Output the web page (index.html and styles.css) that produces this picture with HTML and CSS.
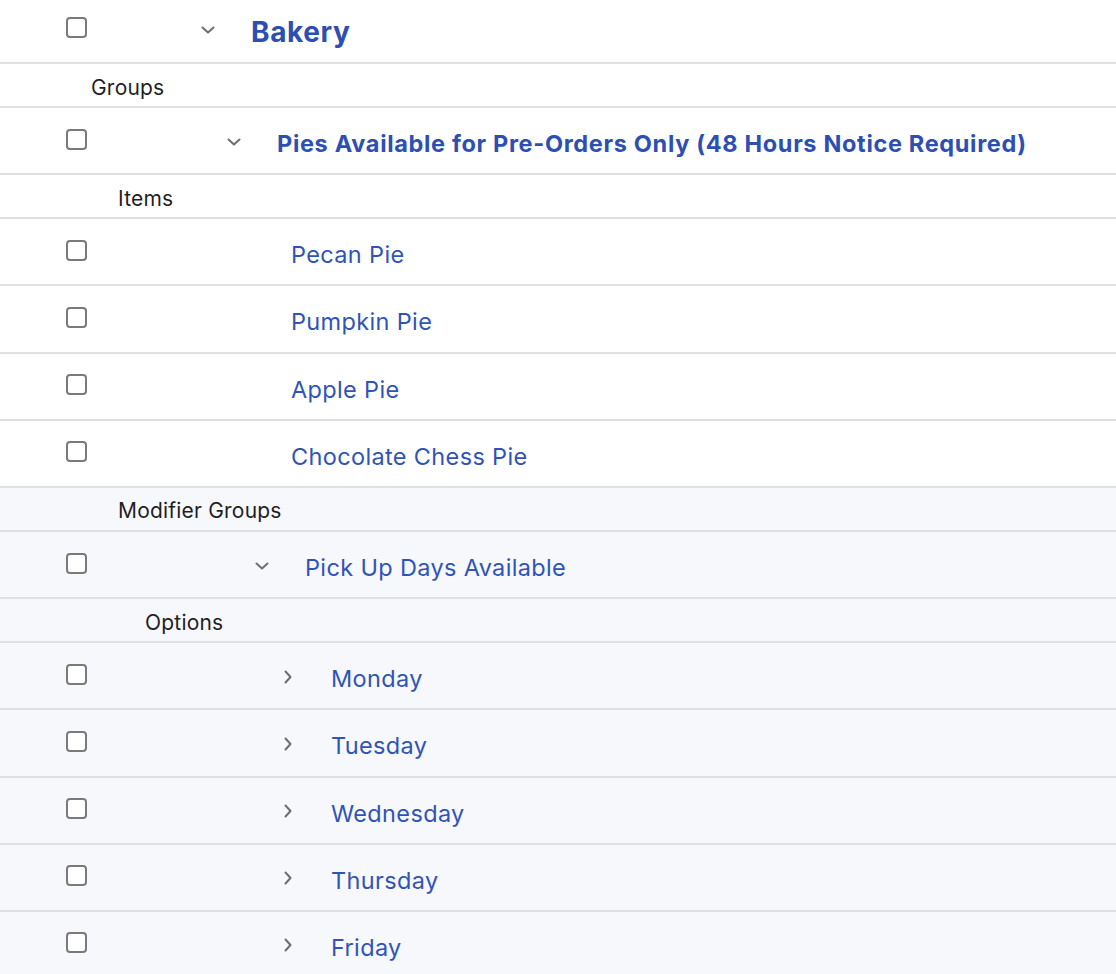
FILE: index.html
```html
<!DOCTYPE html>
<html>
<head>
<meta charset="utf-8">
<link rel="stylesheet" href="styles.css">
</head>
<body>
<div class="tree">
  <div class="row">
    <div class="cb-cell"><span class="box"></span></div>
    <div class="name lv0">
      <span class="chev"><svg width="14" height="8" viewBox="0 0 14 8"><path d="M1.5 1.5 L7 6.5 L12.5 1.5" /></svg></span>
      <span class="title t-xl">Bakery</span>
    </div>
  </div>
  <div class="head h1">Groups</div>
  <div class="row">
    <div class="cb-cell"><span class="box"></span></div>
    <div class="name lv1">
      <span class="chev"><svg width="14" height="8" viewBox="0 0 14 8"><path d="M1.5 1.5 L7 6.5 L12.5 1.5" /></svg></span>
      <span class="title t-lg">Pies Available for Pre-Orders Only (48 Hours Notice Required)</span>
    </div>
  </div>
  <div class="head h2">Items</div>
  <div class="row">
    <div class="cb-cell"><span class="box"></span></div>
    <div class="name leaf"><span class="title">Pecan Pie</span></div>
  </div>
  <div class="row">
    <div class="cb-cell"><span class="box"></span></div>
    <div class="name leaf"><span class="title">Pumpkin Pie</span></div>
  </div>
  <div class="row">
    <div class="cb-cell"><span class="box"></span></div>
    <div class="name leaf"><span class="title">Apple Pie</span></div>
  </div>
  <div class="row">
    <div class="cb-cell"><span class="box"></span></div>
    <div class="name leaf"><span class="title">Chocolate Chess Pie</span></div>
  </div>
  <div class="shaded">
    <div class="head h2">Modifier Groups</div>
    <div class="row">
      <div class="cb-cell"><span class="box"></span></div>
      <div class="name lv2">
        <span class="chev"><svg width="14" height="8" viewBox="0 0 14 8"><path d="M1.5 1.5 L7 6.5 L12.5 1.5" /></svg></span>
        <span class="title">Pick Up Days Available</span>
      </div>
    </div>
    <div class="head h3">Options</div>
    <div class="row">
      <div class="cb-cell"><span class="box"></span></div>
      <div class="name lv3">
        <span class="chev"><svg width="8" height="14" viewBox="0 0 8 14"><path d="M1.5 1.5 L6.5 7 L1.5 12.5" /></svg></span>
        <span class="title">Monday</span>
      </div>
    </div>
    <div class="row">
      <div class="cb-cell"><span class="box"></span></div>
      <div class="name lv3">
        <span class="chev"><svg width="8" height="14" viewBox="0 0 8 14"><path d="M1.5 1.5 L6.5 7 L1.5 12.5" /></svg></span>
        <span class="title">Tuesday</span>
      </div>
    </div>
    <div class="row">
      <div class="cb-cell"><span class="box"></span></div>
      <div class="name lv3">
        <span class="chev"><svg width="8" height="14" viewBox="0 0 8 14"><path d="M1.5 1.5 L6.5 7 L1.5 12.5" /></svg></span>
        <span class="title">Wednesday</span>
      </div>
    </div>
    <div class="row">
      <div class="cb-cell"><span class="box"></span></div>
      <div class="name lv3">
        <span class="chev"><svg width="8" height="14" viewBox="0 0 8 14"><path d="M1.5 1.5 L6.5 7 L1.5 12.5" /></svg></span>
        <span class="title">Thursday</span>
      </div>
    </div>
    <div class="row">
      <div class="cb-cell"><span class="box"></span></div>
      <div class="name lv3">
        <span class="chev"><svg width="8" height="14" viewBox="0 0 8 14"><path d="M1.5 1.5 L6.5 7 L1.5 12.5" /></svg></span>
        <span class="title">Friday</span>
      </div>
    </div>
  </div>
</div>
</body>
</html>
```
FILE: styles.css
```css
html, body {
  margin: 0;
  padding: 0;
  background: #ffffff;
}
body {
  font-family: "Inter", "Liberation Sans", sans-serif;
  overflow: hidden;
}
.tree {
  margin-top: -3.2px;
}
.row {
  display: flex;
  align-items: center;
  height: 67.2px;
  box-sizing: border-box;
  border-bottom: 2px solid #e0e0e0;
  padding-top: 6px;
}
.head {
  display: flex;
  align-items: center;
  height: 44px;
  box-sizing: border-box;
  border-bottom: 2px solid #e0e0e0;
  font-size: 21px;
  letter-spacing: 0.2px;
  color: #1f1f1f;
  padding-top: 4px;
}
.h1 { padding-left: 91px; }
.h2 { padding-left: 118px; }
.h3 { padding-left: 145px; }
.shaded {
  background: #f7f8fc;
}
.cb-cell {
  width: 180px;
  flex: none;
  display: flex;
  align-items: center;
  padding-left: 66px;
  box-sizing: border-box;
  margin-bottom: 9px;
}
.box {
  width: 21px;
  height: 21px;
  box-sizing: border-box;
  border: 2px solid #7a7a7a;
  border-radius: 4px;
  background: #ffffff;
}
.name {
  display: flex;
  align-items: center;
}
.chev {
  width: 16px;
  display: flex;
  justify-content: center;
  align-items: center;
  margin-right: 35px;
  margin-bottom: 4px;
}
.chev svg path {
  fill: none;
  stroke: #6e6e6e;
  stroke-width: 2;
  stroke-linecap: round;
  stroke-linejoin: round;
}
.lv0 { padding-left: 20px; }
.lv1 { padding-left: 46px; }
.lv2 { padding-left: 74px; }
.lv3 { padding-left: 100px; }
.leaf { padding-left: 111px; }
.title {
  font-size: 23.5px;
  color: #3054b6;
  letter-spacing: 0.35px;
}
.t-xl {
  font-size: 28px;
  font-weight: 700;
  letter-spacing: 0.6px;
  color: #2d4fb3;
}
.t-lg {
  font-weight: 700;
  letter-spacing: 0.67px;
  color: #2d4fb3;
}
```
